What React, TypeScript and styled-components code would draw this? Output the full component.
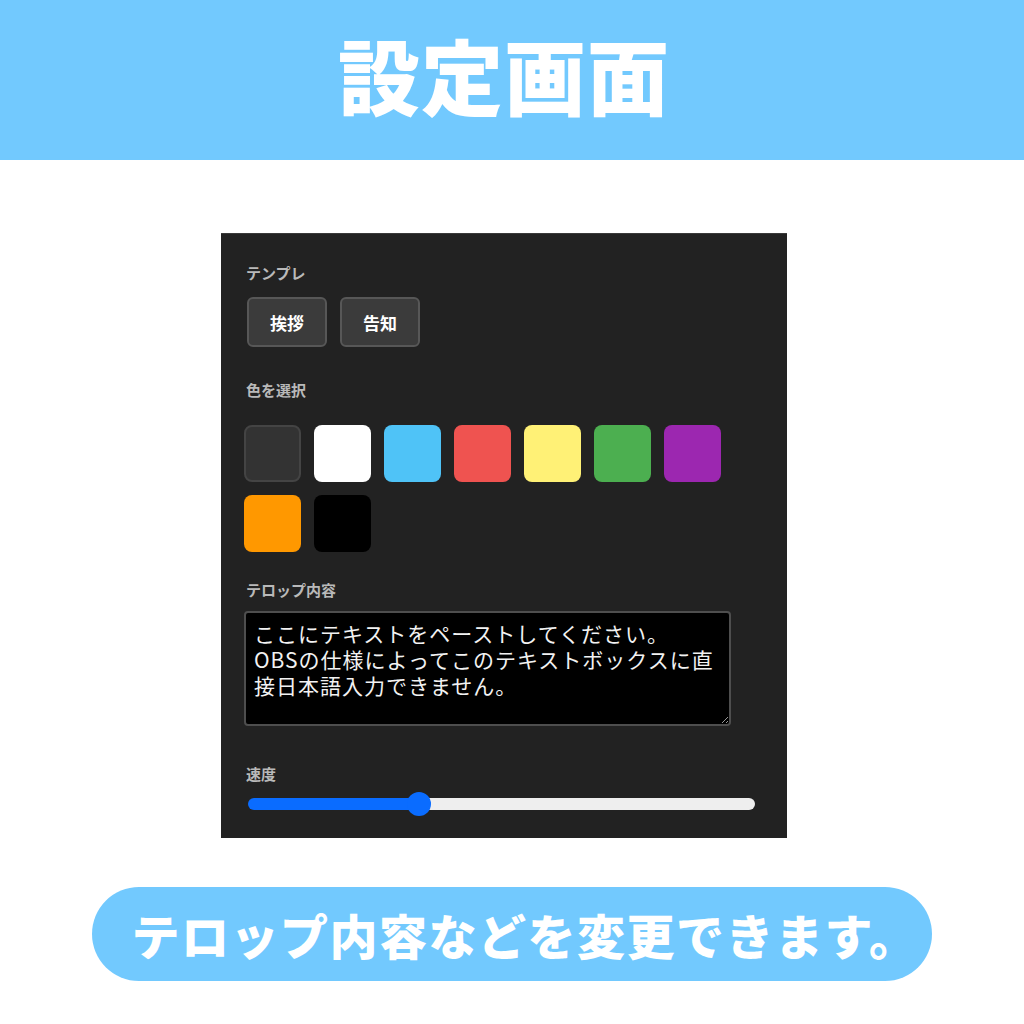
import React from "react";
import styled, { createGlobalStyle } from "styled-components";

const Global = createGlobalStyle`
  html, body { margin: 0; padding: 0; background: #ffffff; }
  body { font-family: "Noto Sans CJK JP", "Noto Sans", sans-serif; }
  * { box-sizing: border-box; }
`;

const Page = styled.div`
  width: 1024px;
  height: 1024px;
  display: flex;
  flex-direction: column;
  background: #ffffff;
`;

const Header = styled.header`
  height: 160px;
  background: #72c9fe;
  display: flex;
  align-items: center;
  justify-content: center;
`;

const Title = styled.h1`
  margin: 0;
  color: #ffffff;
  font-family: "Noto Sans CJK JP", sans-serif;
  font-weight: 900;
  font-size: 82px;
  line-height: 1;
  letter-spacing: 1px;
  transform: translate(-8px, -6px);
`;

const Panel = styled.section`
  margin: 73px 0 0 221px;
  width: 566px;
  height: 605px;
  background: #222222;
  border-top: 1px solid #3a3a3a;
  padding: 29px 23px 0 23px;
  display: flex;
  flex-direction: column;
`;

const Label = styled.div<{ $gap: number }>`
  margin-top: ${(p) => p.$gap}px;
  padding-left: 2px;
  height: 20px;
  line-height: 20px;
  font-size: 15px;
  font-weight: 700;
  color: #b9b9b9;
`;

const ButtonRow = styled.div`
  margin-top: 14px;
  display: flex;
  gap: 13px;
  padding-left: 3px;
`;

const TemplateButton = styled.button`
  width: 80px;
  height: 50px;
  background: #3b3b3b;
  border: 2px solid #575757;
  border-radius: 6px;
  color: #ffffff;
  font-family: "Noto Sans CJK JP", sans-serif;
  font-weight: 700;
  font-size: 17px;
  padding: 0;
`;

const SwatchGrid = styled.div`
  margin-top: 25px;
  display: grid;
  grid-template-columns: repeat(7, 57px);
  grid-auto-rows: 57px;
  column-gap: 13px;
  row-gap: 13px;
`;

const Swatch = styled.div<{ $color: string; $border?: string }>`
  background: ${(p) => p.$color};
  border-radius: 8px;
  border: ${(p) => (p.$border ? `2px solid ${p.$border}` : "none")};
`;

const TextBox = styled.textarea`
  margin-top: 11px;
  width: 487px;
  height: 115px;
  background: #000000;
  border: 2px solid #4e4e4e;
  border-radius: 4px;
  color: #f2f2f2;
  font-family: "Noto Sans CJK JP", sans-serif;
  font-size: 21px;
  line-height: 26px;
  letter-spacing: 1px;
  padding: 7px 8px;
  white-space: pre;
  overflow: hidden;
  outline: none;
`;

const Slider = styled.input`
  margin: 8px 0 0 4px;
  width: 507px;
  height: 24px;
  -webkit-appearance: none;
  appearance: none;
  background: transparent;
  &::-webkit-slider-runnable-track {
    height: 12px;
    border-radius: 6px;
    background: var(--track);
  }
  &::-webkit-slider-thumb {
    -webkit-appearance: none;
    width: 24px;
    height: 24px;
    margin-top: -6px;
    border-radius: 50%;
    background: #0a6cff;
    border: none;
  }
`;

const Footer = styled.div`
  margin: 49px 0 0 92px;
  width: 840px;
  height: 94px;
  border-radius: 47px;
  background: #72c9fe;
  display: flex;
  align-items: center;
  justify-content: center;
`;

const FooterText = styled.p`
  margin: 0;
  color: #ffffff;
  font-family: "Noto Sans CJK JP", sans-serif;
  font-weight: 900;
  font-size: 48px;
  line-height: 1;
  letter-spacing: 1.5px;
  transform: translateX(13px);
`;

const swatches: { color: string; border?: string }[] = [
  { color: "#333333", border: "#444444" },
  { color: "#ffffff" },
  { color: "#4fc3f7" },
  { color: "#ef5350" },
  { color: "#fff176" },
  { color: "#4caf50" },
  { color: "#9c27b0" },
  { color: "#ff9800" },
  { color: "#000000" },
];

const text =
  "ここにテキストをペーストしてください。\nOBSの仕様によってこのテキストボックスに直\n接日本語入力できません。";

export default function App() {
  const value = 33;
  const pct = 33.5;
  return (
    <Page>
      <Global />
      <Header>
        <Title>設定画面</Title>
      </Header>
      <Panel>
        <Label $gap={0}>テンプレ</Label>
        <ButtonRow>
          <TemplateButton>挨拶</TemplateButton>
          <TemplateButton>告知</TemplateButton>
        </ButtonRow>
        <Label $gap={33}>色を選択</Label>
        <SwatchGrid>
          {swatches.map((s, i) => (
            <Swatch key={i} $color={s.color} $border={s.border} />
          ))}
        </SwatchGrid>
        <Label $gap={28}>テロップ内容</Label>
        <TextBox defaultValue={text} spellCheck={false} />
        <Label $gap={38}>速度</Label>
        <Slider
          type="range"
          min={0}
          max={100}
          defaultValue={value}
          style={
            {
              "--track": `linear-gradient(to right, #0a6cff 0%, #0a6cff ${pct}%, #eeeeee ${pct}%, #eeeeee 100%)`,
            } as React.CSSProperties
          }
        />
      </Panel>
      <Footer>
        <FooterText>テロップ内容などを変更できます。</FooterText>
      </Footer>
    </Page>
  );
}
